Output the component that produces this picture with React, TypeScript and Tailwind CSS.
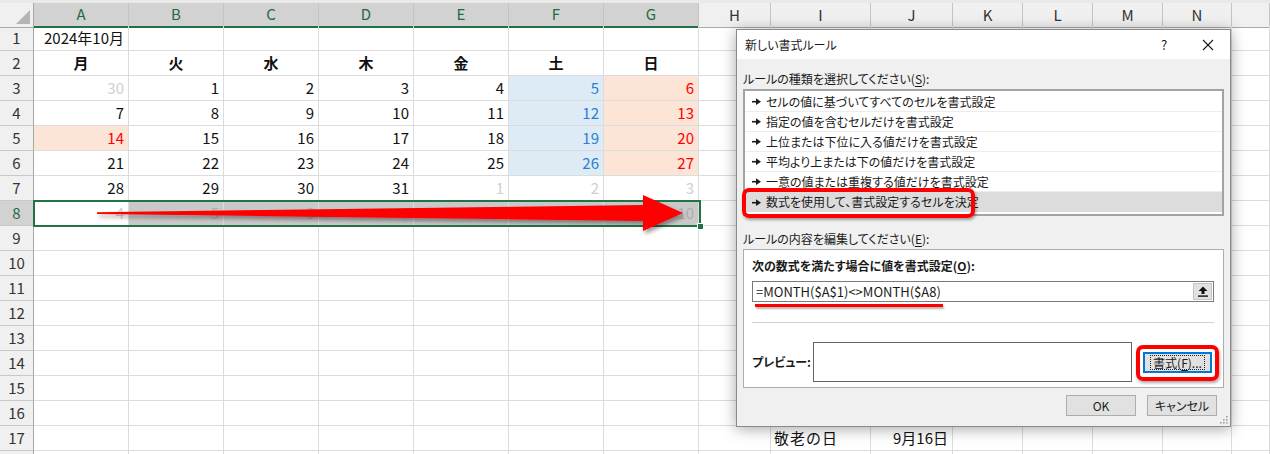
import React from "react";

type Cell = { v: string; color?: string; bg?: string; bold?: boolean; align?: "left" | "right" | "center" };

const GRAY = "text-[#cfcfcf]";
const BLUE = "text-[#2b7fd2]";
const RED = "text-[#ff0000]";
const SAT = "bg-[#ddebf7]";
const SUN = "bg-[#fce4d6]";
const SEL = "bg-[#c9c9c9]";

const letters = ["A", "B", "C", "D", "E", "F", "G", "H", "I", "J", "K", "L", "M", "N", ""];

const week = (nums: number[], opts: { first?: boolean; holiday?: boolean; tail?: number } = {}): Record<number, Cell> => {
  const out: Record<number, Cell> = {};
  nums.forEach((n, i) => {
    const cell: Cell = { v: String(n) };
    if (opts.first && i === 0) cell.color = GRAY;
    if (opts.tail !== undefined && i >= opts.tail) cell.color = GRAY;
    else if (i === 5) {
      cell.color = BLUE;
      cell.bg = SAT;
    } else if (i === 6) {
      cell.color = RED;
      cell.bg = SUN;
    }
    if (opts.holiday && i === 0) {
      cell.color = RED;
      cell.bg = SUN;
    }
    out[i] = cell;
  });
  return out;
};

const rows: Record<number, Cell>[] = [
  { 0: { v: "2024年10月" } },
  Object.fromEntries(["月", "火", "水", "木", "金", "土", "日"].map((d, i) => [i, { v: d, bold: true, align: "center" }])),
  week([30, 1, 2, 3, 4, 5, 6], { first: true }),
  week([7, 8, 9, 10, 11, 12, 13]),
  week([14, 15, 16, 17, 18, 19, 20], { holiday: true }),
  week([21, 22, 23, 24, 25, 26, 27]),
  week([28, 29, 30, 31, 1, 2, 3], { tail: 4 }),
  Object.fromEntries([4, 5, 6, 7, 8, 9, 10].map((n, i) => [i, { v: String(n), color: i === 0 ? GRAY : "text-[#acacac]", bg: i === 0 ? "" : SEL }])),
  {},
  {},
  {},
  {},
  {},
  {},
  {},
  {},
  { 8: { v: "敬老の日", align: "left" }, 9: { v: "9月16日" } },
  {},
];

const gridCols =
  "grid grid-cols-[34px_95px_95px_95px_95px_95px_95px_95px_72px_100px_82px_70px_70px_70px_69px_1fr]";

const Bullet = () => (
  <svg width="9" height="7" viewBox="0 0 9 7" className="shrink-0">
    <rect x="0" y="2.9" width="5" height="1.6" fill="#1a1a1a" />
    <polygon points="4,0.3 9,3.7 4,7" fill="#1a1a1a" />
  </svg>
);

const U = ({ c }: { c: string }) => <span className="underline underline-offset-2">{c}</span>;

const rules = [
  "セルの値に基づいてすべてのセルを書式設定",
  "指定の値を含むセルだけを書式設定",
  "上位または下位に入る値だけを書式設定",
  "平均より上または下の値だけを書式設定",
  "一意の値または重複する値だけを書式設定",
  "数式を使用して、書式設定するセルを決定",
];

function Dialog() {
  return (
    <div className="absolute left-[736px] top-[29px] w-[495px] h-[398px] border border-[#8a8a8a] flex flex-col shadow-[0_2px_14px_rgba(0,0,0,0.35)] text-[12px] text-[#1a1a1a] [font-feature-settings:'palt']">
      <div className="h-[29px] bg-white flex items-center pl-[8px]">
        <span>新しい書式ルール</span>
        <div className="ml-auto flex items-center">
          <div className="w-[44px] h-[29px] flex items-center justify-center text-[13px]">?</div>
          <div className="w-[44px] h-[29px] flex items-center justify-center">
            <svg width="12" height="12" viewBox="0 0 12 12">
              <path d="M1 1 L11 11 M11 1 L1 11" stroke="#1a1a1a" strokeWidth="1.1" />
            </svg>
          </div>
        </div>
      </div>
      <div className="relative flex-1 bg-[#f0f0f0] px-[6px] flex flex-col">
        <div className="mt-[11px] h-[18px] leading-[18px]">
          ルールの種類を選択してください(<U c="S" />):
        </div>
        <div className="mt-[1px] h-[127px] border-2 border-[#a3a3a3] bg-white pt-[1px]">
          {rules.map((r, i) => (
            <div
              key={r}
              className={`relative h-[20px] flex items-center gap-[5px] pl-[7px] ${i < 5 ? "border-b border-[#ececec]" : "bg-[#dcdcdc]"}`}
            >
              <Bullet />
              <span>{r}</span>
              {i === 5 && (
                <div className="absolute -left-[3px] -top-[4px] w-[233px] h-[30px] border-4 border-[#ff0000] rounded-[7px] shadow-[1px_2px_3px_rgba(0,0,0,0.35)]" />
              )}
            </div>
          ))}
        </div>
        <div className="mt-[14px] h-[18px] leading-[18px]">
          ルールの内容を編集してください(<U c="E" />):
        </div>
        <div className="mt-[1px] h-[139px] border border-[#adadad] bg-white pl-[8px] pr-[9px] flex flex-col">
          <div className="mt-[7px] h-[18px] leading-[18px] font-bold">
            次の数式を満たす場合に値を書式設定(<U c="O" />):
          </div>
          <div className="relative mt-[6px] h-[21px] border border-[#7a7a7a] flex items-center">
            <span className="pl-[3px] text-[13px] [font-feature-settings:normal]">=MONTH($A$1)&lt;&gt;MONTH($A8)</span>
            <div className="ml-auto mr-[1px] w-[19px] h-[17px] bg-[#e1e1e1] border border-[#c4c4c4] flex items-center justify-center">
              <svg width="10" height="11" viewBox="0 0 10 11">
                <polygon points="5,0.5 9.5,5 6.5,5 6.5,8 3.5,8 3.5,5 0.5,5" fill="#111" />
                <rect x="0" y="9.4" width="10" height="1.4" fill="#111" />
              </svg>
            </div>
            <div className="absolute left-[2px] -bottom-[6px] w-[188px] h-[3.5px] bg-[#ff0000] shadow-[1px_2px_2px_rgba(0,0,0,0.3)]" />
          </div>
          <div className="mt-[20px] border-t border-[#d0d0d0]" />
          <div className="mt-[19px] flex items-center">
            <div className="w-[61px] font-bold">プレビュー:</div>
            <div className="w-[319px] h-[40px] border border-[#646464] bg-white" />
            <div className="relative ml-[11px]">
              <div className="w-[69px] h-[21px] bg-[#e1e1e1] border-2 border-[#0078d7] flex items-center justify-center">
                <span className="px-[2px] outline outline-1 outline-dotted outline-[#222] leading-[13px]">
                  書式(<U c="F" />)...
                </span>
              </div>
              <div className="absolute -left-[7px] -top-[7px] w-[83px] h-[36px] border-4 border-[#ff0000] rounded-[7px] shadow-[1px_2px_3px_rgba(0,0,0,0.35)]" />
            </div>
          </div>
        </div>
        <div className="mt-[7px] flex justify-end gap-[11px] pr-[7px]">
          <div className="w-[70px] h-[21px] bg-[#e1e1e1] border border-[#adadad] flex items-center justify-center">OK</div>
          <div className="w-[70px] h-[21px] bg-[#e1e1e1] border border-[#adadad] flex items-center justify-center">キャンセル</div>
        </div>
        <svg width="9" height="9" viewBox="0 0 9 9" className="absolute right-[2px] bottom-[2px]">
          {[
            [7, 1],
            [7, 4],
            [4, 4],
            [7, 7],
            [4, 7],
            [1, 7],
          ].map(([x, y]) => (
            <rect key={`${x}-${y}`} x={x} y={y} width="1.6" height="1.6" fill="#a0a0a0" />
          ))}
        </svg>
      </div>
    </div>
  );
}

export default function App() {
  return (
    <div className="relative w-[1270px] h-[454px] overflow-hidden bg-white font-['Noto_Sans_CJK_JP',sans-serif] text-[#111]">
      {/* column headers */}
      <div className={`${gridCols} h-[26px] pt-[3px] bg-[#e9e9e9]`}>
        <div className="relative bg-[#f0f0f0] border-r border-b border-[#a8a8a8]">
          <svg width="14" height="14" viewBox="0 0 14 14" className="absolute right-[3px] bottom-[3px]">
            <polygon points="14,0 14,14 0,14" fill="#b5b5b5" />
          </svg>
        </div>
        {letters.map((l, i) => (
          <div
            key={i}
            className={`flex items-center justify-center text-[15px] border-r border-[#c4c4c4] ${
              i < 7 ? "bg-[#d2d2d2] text-[#1d6b40] border-b-2 border-b-[#217346]" : "bg-[#f0f0f0] text-[#333] border-b border-b-[#a8a8a8]"
            }`}
          >
            {l}
          </div>
        ))}
      </div>

      {/* rows */}
      {rows.map((row, r) => (
        <div key={r} className={`${gridCols} h-[25px]`}>
          <div
            className={`flex items-center justify-center text-[15px] border-b border-[#c8c8c8] border-r border-r-[#a8a8a8] ${
              r === 7 ? "bg-[#d2d2d2] text-[#1d6b40]" : "bg-[#f0f0f0] text-[#333]"
            }`}
          >
            {r < 17 ? r + 1 : ""}
          </div>
          {letters.map((_, c) => {
            const cell = row[c];
            const align =
              cell?.align === "center" ? "justify-center" : cell?.align === "left" ? "justify-start pl-[3px] tracking-[1px]" : "justify-end";
            return (
              <div
                key={c}
                className={`flex items-center px-[4px] text-[15px] border-r border-b border-[#dcdcdc] ${align} ${cell?.bg ?? ""} ${
                  cell?.color ?? ""
                } ${cell?.bold ? "font-bold" : ""}`}
              >
                {cell?.v}
              </div>
            );
          })}
        </div>
      ))}

      {/* selected range A8:G8 */}
      <div className="absolute left-[33px] top-[200px] w-[668px] h-[27px] border-2 border-[#217346]" />
      <div className="absolute left-[697px] top-[223px] w-[7px] h-[7px] bg-[#217346] border border-white" />

      {/* red arrow */}
      <svg width="1270" height="454" className="absolute left-0 top-0 pointer-events-none">
        <defs>
          <filter id="sh" x="-5%" y="-50%" width="110%" height="200%">
            <feDropShadow dx="2" dy="3" stdDeviation="2" floodColor="#000" floodOpacity="0.4" />
          </filter>
        </defs>
        <polygon points="97,212.3 643,205 643,195 683,213 643,231 643,221 97,214" fill="#ff0000" filter="url(#sh)" />
      </svg>

      <Dialog />
    </div>
  );
}
